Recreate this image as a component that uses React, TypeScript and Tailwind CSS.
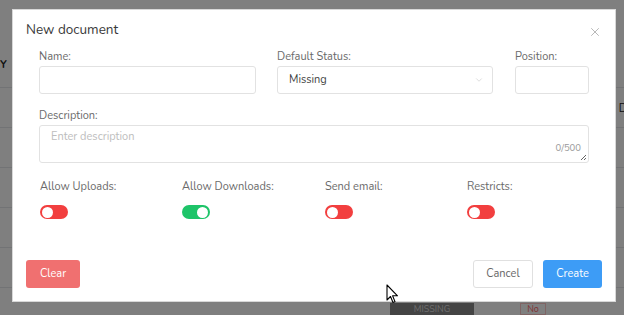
import { X, ChevronDown } from 'lucide-react'

const font = { fontFamily: '"Nunito", Lato, "Open Sans", sans-serif' }

function Toggle({ on }: { on: boolean }) {
  return (
    <div
      className={`w-[28px] h-[14px] rounded-full flex items-center px-[2px] ${
        on ? 'bg-[#1ec469] justify-end' : 'bg-[#f23f3f] justify-start'
      }`}
    >
      <div className="w-[11px] h-[11px] rounded-full bg-white" />
    </div>
  )
}

const switches = [
  { label: 'Allow Uploads:', on: false },
  { label: 'Allow Downloads:', on: true },
  { label: 'Send email:', on: false },
  { label: 'Restricts:', on: false },
]

export default function App() {
  return (
    <div className="relative w-[624px] h-[315px] overflow-hidden bg-white text-[#333]" style={font}>
      {/* page behind the dialog */}
      <div className="flex flex-col w-full h-full">
        <div className="h-[88px] flex items-end pb-[14px] border-b border-gray-200">
          <span className="text-[11px] font-bold text-[#222]">Y</span>
        </div>
        {[0, 1, 2, 3, 4].map(i => (
          <div key={i} className="h-[40px] border-b border-gray-200 flex justify-end items-start pt-[16px]">
            {i === 0 && <span className="text-[11px] text-[#222] -mr-[3px] leading-[10px]">D</span>}
          </div>
        ))}
        <div className="flex-1 flex items-end">
          <div className="ml-[390px] w-[84px] h-[12px] bg-[#888] text-[#ddd] text-[9px] leading-[12px] text-center">MISSING</div>
          <div className="ml-[46px] w-[26px] h-[12px] border border-red-200 text-red-400 text-[9px] leading-[11px] text-center">No</div>
        </div>
      </div>

      {/* overlay */}
      <div className="absolute inset-0 bg-black/50" />

      {/* dialog */}
      <div className="absolute left-[12px] top-[9px] w-[604px] h-[293px] bg-white border border-[#d8d8d8] flex flex-col">
        <div className="flex items-center justify-between pl-[13px] pr-[13px] pt-[11px]">
          <h2 className="text-[13.5px] leading-[18px] text-[#3a3a3a]">New document</h2>
          <X size={14} strokeWidth={1.2} className="text-[#9a9a9a] mt-[4px]" />
        </div>

        <div className="px-[26px] pt-[10px] text-[11px] text-[#6a6a6a]">
          <div className="grid grid-cols-[217px_216px_1fr] gap-x-[21px]">
            <div>
              <label className="block leading-[16px] mb-[1px]">Name:</label>
              <div className="h-[28px] border border-[#e2e2e2] rounded-[3px]" />
            </div>
            <div>
              <label className="block leading-[16px] mb-[1px]">Default Status:</label>
              <div className="h-[28px] border border-[#e2e2e2] rounded-[3px] flex items-center justify-between pl-[11px] pr-[8px] text-[#444]">
                <span>Missing</span>
                <ChevronDown size={10} strokeWidth={1.5} className="text-[#c8c8c8]" />
              </div>
            </div>
            <div className="pl-[1px]">
              <label className="block leading-[16px] mb-[1px]">Position:</label>
              <div className="h-[28px] border border-[#e2e2e2] rounded-[3px]" />
            </div>
          </div>

          <div className="mt-[14px]">
            <label className="block leading-[16px] mb-[1px]">Description:</label>
            <div className="relative h-[38px] border border-[#e2e2e2] rounded-[3px] pl-[11px] pt-[3px]">
              <span className="text-[#bdbdbd] text-[11px]">Enter description</span>
              <span className="absolute right-[7px] top-[15px] text-[9.5px] text-[#999]">0/500</span>
              <svg className="absolute right-[1px] bottom-[1px]" width="7" height="7" viewBox="0 0 7 7">
                <path d="M6 1 L1 6 M6 4 L4 6" stroke="#666" strokeWidth="1" />
              </svg>
            </div>
          </div>

          <div className="mt-[16px] grid grid-cols-[142px_143px_142px_1fr]">
            {switches.map(s => (
              <div key={s.label} className="pl-[1px]">
                <label className="block leading-[16px] mb-[10px]">{s.label}</label>
                <Toggle on={s.on} />
              </div>
            ))}
          </div>
        </div>

        <div className="mt-auto flex items-center justify-between px-[13px] pb-[13px] text-[11px]">
          <button className="w-[54px] h-[28px] rounded-[3px] bg-[#f07070] text-white">Clear</button>
          <div className="flex gap-[10px]">
            <button className="w-[60px] h-[28px] rounded-[3px] border border-[#e0e0e0] bg-white text-[#666]">Cancel</button>
            <button className="w-[59px] h-[28px] rounded-[3px] bg-[#3d9cf6] text-white">Create</button>
          </div>
        </div>
      </div>

      {/* mouse pointer */}
      <svg className="absolute left-[386px] top-[284px]" width="14" height="20" viewBox="0 0 14 20">
        <path d="M1 1 L1 16 L4.5 12.5 L7 18.5 L9 17.6 L6.6 11.8 L11.5 11.8 Z" fill="white" stroke="black" strokeWidth="1.1" strokeLinejoin="round" />
      </svg>
    </div>
  )
}
